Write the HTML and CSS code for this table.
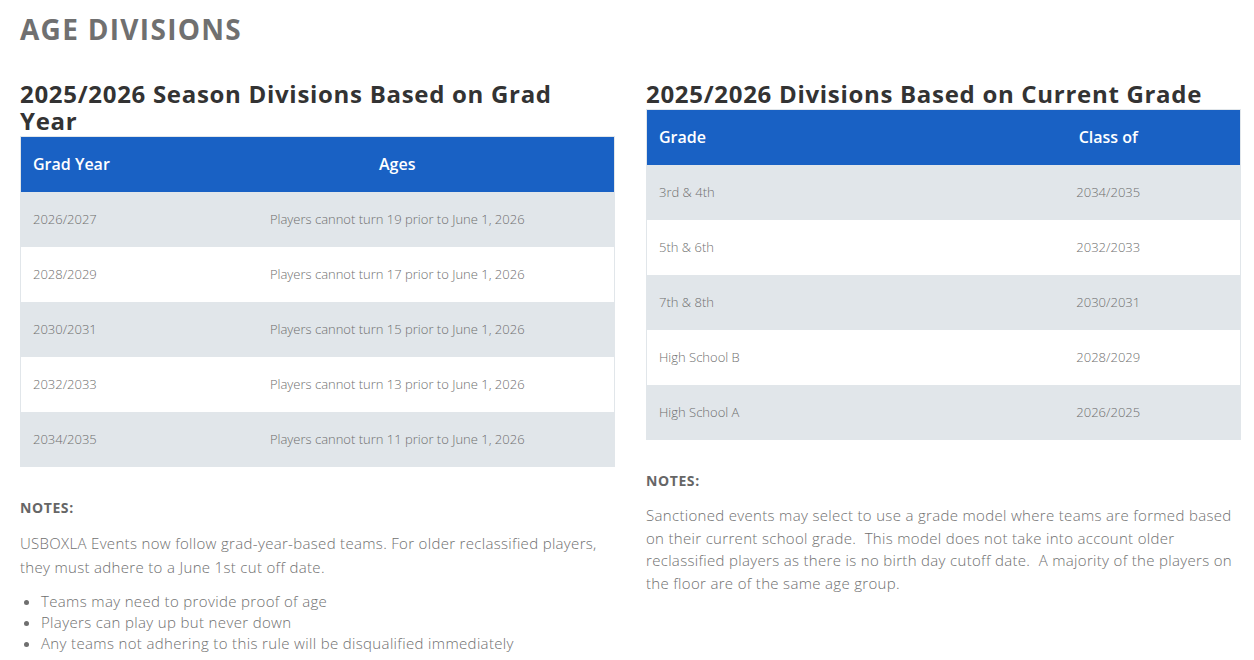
FILE: index.html
```html
<!DOCTYPE html>
<html>
<head>
<meta charset="utf-8">
<link rel="stylesheet" href="styles.css">
</head>
<body>
<div class="page">
  <h1 class="title">AGE DIVISIONS</h1>
  <div class="columns">
    <section class="col">
      <h2 class="heading">2025/2026 Season Divisions Based on Grad Year</h2>
      <table class="tbl tbl-grad">
        <thead>
          <tr><th class="c1">Grad Year</th><th class="c2">Ages</th></tr>
        </thead>
        <tbody>
          <tr><td class="c1">2026/2027</td><td class="c2">Players cannot turn 19 prior to June 1, 2026</td></tr>
          <tr><td class="c1">2028/2029</td><td class="c2">Players cannot turn 17 prior to June 1, 2026</td></tr>
          <tr><td class="c1">2030/2031</td><td class="c2">Players cannot turn 15 prior to June 1, 2026</td></tr>
          <tr><td class="c1">2032/2033</td><td class="c2">Players cannot turn 13 prior to June 1, 2026</td></tr>
          <tr><td class="c1">2034/2035</td><td class="c2">Players cannot turn 11 prior to June 1, 2026</td></tr>
        </tbody>
      </table>
      <div class="notes">
        <p class="notes-label">NOTES:</p>
        <p class="notes-text left-text">USBOXLA Events now follow grad-year-based teams. For older reclassified players, they must adhere to a June 1st cut off date.</p>
        <ul class="notes-list">
          <li>Teams may need to provide proof of age</li>
          <li>Players can play up but never down</li>
          <li>Any teams not adhering to this rule will be disqualified immediately</li>
        </ul>
      </div>
    </section>
    <section class="col">
      <h2 class="heading">2025/2026 Divisions Based on Current Grade</h2>
      <table class="tbl tbl-grade">
        <thead>
          <tr><th class="c1">Grade</th><th class="c2">Class of</th></tr>
        </thead>
        <tbody>
          <tr><td class="c1">3rd &amp; 4th</td><td class="c2">2034/2035</td></tr>
          <tr><td class="c1">5th &amp; 6th</td><td class="c2">2032/2033</td></tr>
          <tr><td class="c1">7th &amp; 8th</td><td class="c2">2030/2031</td></tr>
          <tr><td class="c1">High School B</td><td class="c2">2028/2029</td></tr>
          <tr><td class="c1">High School A</td><td class="c2">2026/2025</td></tr>
        </tbody>
      </table>
      <div class="notes">
        <p class="notes-label">NOTES:</p>
        <p class="notes-text right-text">Sanctioned events may select to use a grade model where teams are formed based on their current school grade.&nbsp; This model does not take into account older reclassified players as there is no birth day cutoff date.&nbsp; A majority of the players on the floor are of the same age group.</p>
      </div>
    </section>
  </div>
</div>
</body>
</html>
```

FILE: styles.css
```css
* { box-sizing: border-box; }
html, body { margin: 0; padding: 0; background: #ffffff; }
body {
  font-family: "Open Sans", "Liberation Sans", sans-serif;
  color: #777777;
}
.page {
  padding: 12px 13px 0 20px;
  width: 1254px;
}
.title {
  margin: 0;
  font-size: 28px;
  line-height: 34px;
  font-weight: 700;
  letter-spacing: 1.3px;
  color: #707070;
}
.columns {
  display: flex;
  gap: 31px;
  margin-top: 34px;
  align-items: flex-start;
}
.col {
  width: 595px;
  flex: 0 0 595px;
}
.heading {
  margin: 0 0 2px 0;
  font-size: 24px;
  line-height: 27px;
  font-weight: 700;
  letter-spacing: 0.7px;
  color: #333333;
}
.tbl {
  width: 595px;
  border-collapse: collapse;
  border: 1px solid #e1e6ea;
  table-layout: fixed;
}
.tbl th {
  background: #1961c4;
  color: #ffffff;
  font-size: 16px;
  font-weight: 600;
  height: 55px;
  padding: 0 12px;
  text-align: left;
}
.tbl td {
  height: 55px;
  padding: 0 12px;
  font-size: 13px;
  font-weight: 300;
  color: #6f6f6f;
}
.tbl tbody tr:nth-child(odd) td { background: #e1e6ea; }
.tbl tbody tr:nth-child(even) td { background: #ffffff; }
.tbl .c2 { text-align: center; }
.tbl-grad .c1 { width: 160px; }
.tbl-grade .c1 { width: 330px; }
.notes { margin-top: 32px; }
.notes-label {
  margin: 0;
  font-size: 14px;
  line-height: 18px;
  font-weight: 700;
  letter-spacing: 0.6px;
  color: #666666;
}
.notes-text {
  margin: 14px 0 0 0;
  font-size: 15px;
  font-weight: 300;
  letter-spacing: 0.32px;
  color: #6f6f6f;
}
.left-text { line-height: 24px; }
.right-text { line-height: 22.5px; }
.notes-list {
  margin: 12px 0 0 0;
  padding-left: 21px;
  font-size: 15px;
  line-height: 21px;
  font-weight: 300;
  letter-spacing: 0.35px;
  color: #6f6f6f;
}
```
